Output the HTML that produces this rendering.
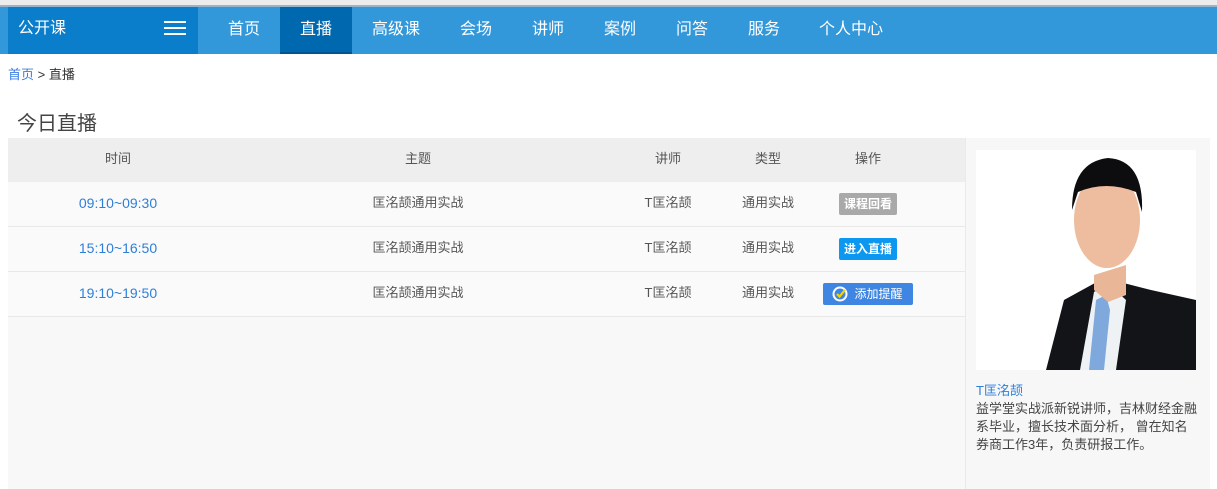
<!DOCTYPE html>
<html><head><meta charset="utf-8"><style>
*{margin:0;padding:0;box-sizing:border-box}
body{width:1217px;height:489px;overflow:hidden;background:#fff;font-family:"Liberation Sans","Noto Sans CJK SC",sans-serif;position:relative;color:#555}
.top{position:absolute;left:0;top:0;width:1217px;height:7px;background:#ececec;border-bottom:2px solid #9ab3c6}
.nav{position:absolute;left:0;top:7px;width:1217px;height:47px;background:#3398d9}
.brand{position:absolute;left:8px;top:0;width:190px;height:47px;background:#0a7dcb;color:#fff;font-size:16px;line-height:44px;padding-left:10px}
.menu{position:absolute;right:12px;top:13px;width:22px;height:16px}
.menu i{position:absolute;left:0;height:2px;background:#fff;width:22px}
.nav a{position:absolute;top:0;height:47px;line-height:46px;color:#fff;font-size:16px;text-align:center;text-decoration:none}
.nav a.on{background:#0068af;border-bottom:2px solid #00548f}
.crumb{position:absolute;left:8px;top:64px;font-size:13px;color:#333}
.crumb span{color:#3a7de0}
h2{position:absolute;left:17px;top:107px;font-size:20px;font-weight:normal;color:#444}
.tbl{position:absolute;left:8px;top:138px;width:957px;height:351px;background:#f8f8f8}
.row{position:absolute;left:0;width:957px;height:45px;font-size:13px;line-height:42px;color:#555}
.row div{position:absolute;top:0;text-align:center}
.hd{background:#eeeeee;top:0}
.r{background:#fafafa;border-bottom:1px solid #e8e8e8}
.t{color:#2e7fd8;font-size:14px}
.btn{display:inline-block;line-height:20px;height:22px;padding:1px 5px;color:#fff;font-size:12px;font-weight:bold;border-radius:2px;vertical-align:middle}
.side{position:absolute;left:965px;top:138px;width:245px;height:351px;background:#f7f7f7;border-left:1px solid #eaeaea}
.photo{position:absolute;left:10px;top:12px;width:220px;height:220px;background:#fff;overflow:hidden}
.side p{position:absolute;left:10px;top:244px;width:222px;font-size:13px;line-height:18px;color:#444}
</style></head><body>
<div class="top"></div>
<div class="nav">
<div class="brand">公开课<div class="menu"><i style="top:1px"></i><i style="top:7px"></i><i style="top:13px"></i></div></div>
<a style="left:208px;width:72px">首页</a>
<a class="on" style="left:280px;width:72px">直播</a>
<a style="left:352px;width:88px">高级课</a>
<a style="left:440px;width:72px">会场</a>
<a style="left:512px;width:72px">讲师</a>
<a style="left:584px;width:72px">案例</a>
<a style="left:656px;width:72px">问答</a>
<a style="left:728px;width:72px">服务</a>
<a style="left:800px;width:102px">个人中心</a>
</div>
<div class="crumb"><span>首页</span> &gt; 直播</div>
<h2>今日直播</h2>
<div class="tbl">
<div class="row hd" style="height:44px"><div style="left:60px;width:100px">时间</div><div style="left:310px;width:200px">主题</div><div style="left:620px;width:80px">讲师</div><div style="left:720px;width:80px">类型</div><div style="left:820px;width:80px">操作</div></div>
<div class="row r" style="top:44px"><div class="t" style="left:50px;width:120px">09:10~09:30</div><div style="left:310px;width:200px">匡洺颉通用实战</div><div style="left:620px;width:80px">T匡洺颉</div><div style="left:720px;width:80px">通用实战</div><div style="left:800px;width:120px"><span class="btn" style="background:#a9a9a9">课程回看</span></div></div>
<div class="row r" style="top:89px"><div class="t" style="left:50px;width:120px">15:10~16:50</div><div style="left:310px;width:200px">匡洺颉通用实战</div><div style="left:620px;width:80px">T匡洺颉</div><div style="left:720px;width:80px">通用实战</div><div style="left:800px;width:120px"><span class="btn" style="background:#0c98f0">进入直播</span></div></div>
<div class="row r" style="top:134px"><div class="t" style="left:50px;width:120px">19:10~19:50</div><div style="left:310px;width:200px">匡洺颉通用实战</div><div style="left:620px;width:80px">T匡洺颉</div><div style="left:720px;width:80px">通用实战</div><div style="left:815px;width:90px"><span class="btn" style="background:#3f86e3;font-weight:normal;width:90px;padding-left:26px;position:relative">添加提醒<svg style="position:absolute;left:9px;top:3px" width="16" height="16"><circle cx="8" cy="8" r="6.5" fill="none" stroke="#fff" stroke-width="2"/><path d="M5 8l2.5 2.5L13 4" stroke="#f5d300" stroke-width="2.2" fill="none"/></svg></span></div></div>
</div>
<div class="side">
<div class="photo"><svg width="220" height="220">
<path d="M70 220 L88 150 L128 128 L175 140 L220 150 L220 220Z" fill="#121418"/>
<path d="M104 220 L118 142 L132 133 L150 150 L140 220Z" fill="#eef2f5"/>
<path d="M113 220 L120 150 L130 145 L134 160 L128 220Z" fill="#7fa8dc"/>
<path d="M118 125 L150 115 L150 145 L132 152 L118 140Z" fill="#e9b798"/>
<ellipse cx="131" cy="70" rx="33" ry="48" fill="#eebc9e"/>
<path d="M96 60 Q96 12 132 8 Q168 10 166 62 L160 42 Q130 30 102 42Z" fill="#0d0d0f"/>
</svg></div>
<p><span style="color:#2e7fd8">T匡洺颉</span><br>益学堂实战派新锐讲师，吉林财经金融系毕业，擅长技术面分析， 曾在知名券商工作3年，负责研报工作。</p>
</div>
</body></html>
